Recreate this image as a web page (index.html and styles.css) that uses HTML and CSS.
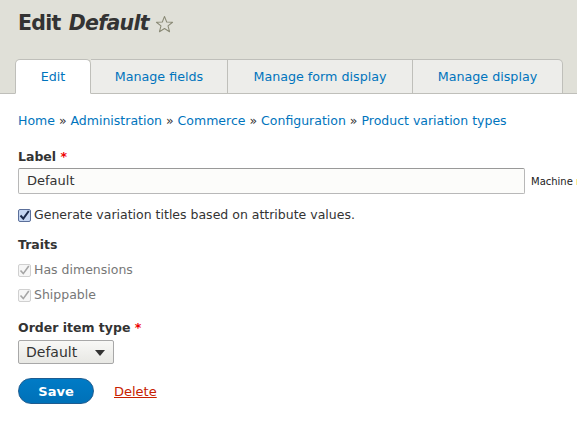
FILE: index.html
```html
<!DOCTYPE html>
<html>
<head>
<meta charset="utf-8">
<link rel="stylesheet" href="styles.css">
</head>
<body>
<header class="head">
  <h1 class="title">Edit <em>Default</em> <svg class="star" width="19" height="19" viewBox="0 0 20 20"><path d="M10 1.5 L12.3 7.3 L18.5 7.6 L13.7 11.5 L15.3 17.6 L10 14.2 L4.7 17.6 L6.3 11.5 L1.5 7.6 L7.7 7.3 Z" fill="none" stroke="#8a8a76" stroke-width="1.1" stroke-linejoin="round"/></svg></h1>
  <nav class="tabs">
    <a class="tab active">Edit</a>
    <a class="tab">Manage fields</a>
    <a class="tab">Manage form display</a>
    <a class="tab last">Manage display</a>
  </nav>
</header>
<main class="content">
  <div class="crumbs"><a>Home</a> » <a>Administration</a> » <a>Commerce</a> » <a>Configuration</a> » <a>Product variation types</a></div>
  <div class="field">
    <label class="lbl">Label <span class="req">*</span></label>
    <div class="row">
      <div class="input">Default</div>
      <span class="machine">Machine <span class="mn">name</span></span>
    </div>
  </div>
  <div class="check">
    <span class="cb on"><svg width="11" height="11" viewBox="0 0 11 11"><path d="M1.5 5.5 L4.3 8.6 L9.8 1" fill="none" stroke="#1c2a4a" stroke-width="2"/></svg></span>
    <span>Generate variation titles based on attribute values.</span>
  </div>
  <div class="group">
    <div class="lbl">Traits</div>
    <div class="check dis">
      <span class="cb off"><svg width="11" height="11" viewBox="0 0 11 11"><path d="M1.5 5.5 L4.3 8.6 L9.8 1" fill="none" stroke="#a5a5a5" stroke-width="1.6"/></svg></span>
      <span>Has dimensions</span>
    </div>
    <div class="check dis">
      <span class="cb off"><svg width="11" height="11" viewBox="0 0 11 11"><path d="M1.5 5.5 L4.3 8.6 L9.8 1" fill="none" stroke="#a5a5a5" stroke-width="1.6"/></svg></span>
      <span>Shippable</span>
    </div>
  </div>
  <div class="field sel-field">
    <label class="lbl">Order item type <span class="req">*</span></label>
    <div class="select">Default <span class="arrow"></span></div>
  </div>
  <div class="actions">
    <button class="save">Save</button>
    <a class="delete">Delete</a>
  </div>
</main>
</body>
</html>
```

FILE: styles.css
```css
* { box-sizing: border-box; }
html, body { margin: 0; padding: 0; background: #fff; }
body {
  font-family: "DejaVu Sans", "Lucida Grande", sans-serif;
  font-size: 12.5px;
  color: #333;
  width: 577px;
  overflow: hidden;
}
.head {
  background: #e0e0d8;
  padding: 9px 0 0 0;
  border-bottom: 1px solid #bfbfba;
  height: 94px;
  display: flex;
  flex-direction: column;
  justify-content: space-between;
}
.title {
  margin: 0 0 0 18px;
  font-size: 20.5px;
  letter-spacing: -0.7px;
  font-weight: bold;
  color: #333;
  line-height: 28px;
  display: flex;
  align-items: center;
  gap: 6px;
}
.title em { font-style: italic; margin-left: 2px; }
.star { margin-top: 2px; }
.tabs {
  display: flex;
  margin-left: 15px;
  margin-bottom: -1px;
}
.tab {
  height: 35px;
  display: flex;
  align-items: center;
  justify-content: center;
  background: #ededea;
  border: 1px solid #bfbfba;
  border-left: none;
  color: #0074bd;
  font-size: 12.7px;
}
.tab.active {
  background: #fff;
  border-left: 1px solid #bfbfba;
  border-bottom-color: #fff;
  border-radius: 5px 5px 0 0;
  width: 76px;
}
.tabs .tab:nth-child(2) { width: 137px; }
.tabs .tab:nth-child(3) { width: 185px; }
.tab.last { width: 150px; border-radius: 0 5px 0 0; }

.content { padding: 17px 0 0 18px; }
.crumbs { color: #333; line-height: 20px; white-space: nowrap; }
.crumbs a { color: #0074bd; }
.field { margin-top: 17px; }
.lbl { font-weight: bold; display: block; line-height: 18px; color: #333; }
.req { color: #e00; }
.row { display: flex; align-items: center; margin-top: 2px; width: 559px; overflow: hidden; }
.input {
  flex: 0 0 auto;
  width: 507px;
  height: 26px;
  border: 1px solid #b8b8b8;
  border-top-color: #999;
  border-radius: 2px;
  background: #fcfcfa;
  padding: 0 8px;
  line-height: 24px;
  font-size: 13px;
  color: #333;
}
.machine { font-size: 10px; margin-left: 6px; color: #222; white-space: nowrap; }
.mn { color: #e29700; }
.check { display: flex; align-items: center; gap: 3px; line-height: 18px; }
.field + .check { margin-top: 12px; }
.cb {
  width: 13px; height: 13px;
  border-radius: 2px;
  display: inline-flex; align-items: center; justify-content: center;
}
.cb.on { background: #c7d7f2; border: 1px solid #5b6f9a; }
.cb.off { background: #f6f6f6; border: 1px solid #d0d0d0; }
.check.dis { color: #777; margin-top: 7px; }
.group { margin-top: 12px; }
.group .check.dis:first-of-type { margin-top: 8px; }
.sel-field { margin-top: 15px; }
.select {
  margin-top: 3px;
  width: 96px; height: 24px;
  border: 1px solid #a8a8a8;
  border-radius: 2px;
  background: linear-gradient(#f8f8f6, #e8e8e4);
  display: flex; align-items: center;
  padding-left: 7px;
  font-size: 14px;
  color: #333;
  position: relative;
}
.arrow {
  position: absolute; right: 8px; top: 9px;
  width: 0; height: 0;
  border-left: 5px solid transparent;
  border-right: 5px solid transparent;
  border-top: 6px solid #333;
}
.actions { display: flex; align-items: center; margin-top: 14px; gap: 20px; }
.save {
  width: 76px; height: 26px;
  border-radius: 14px;
  border: 1px solid #1e5c90;
  background: linear-gradient(#007bc6, #0071b8);
  color: #fff;
  font-family: inherit;
  font-weight: bold;
  font-size: 13px;
}
.delete { color: #c72100; text-decoration: underline; font-size: 13px; }
```
